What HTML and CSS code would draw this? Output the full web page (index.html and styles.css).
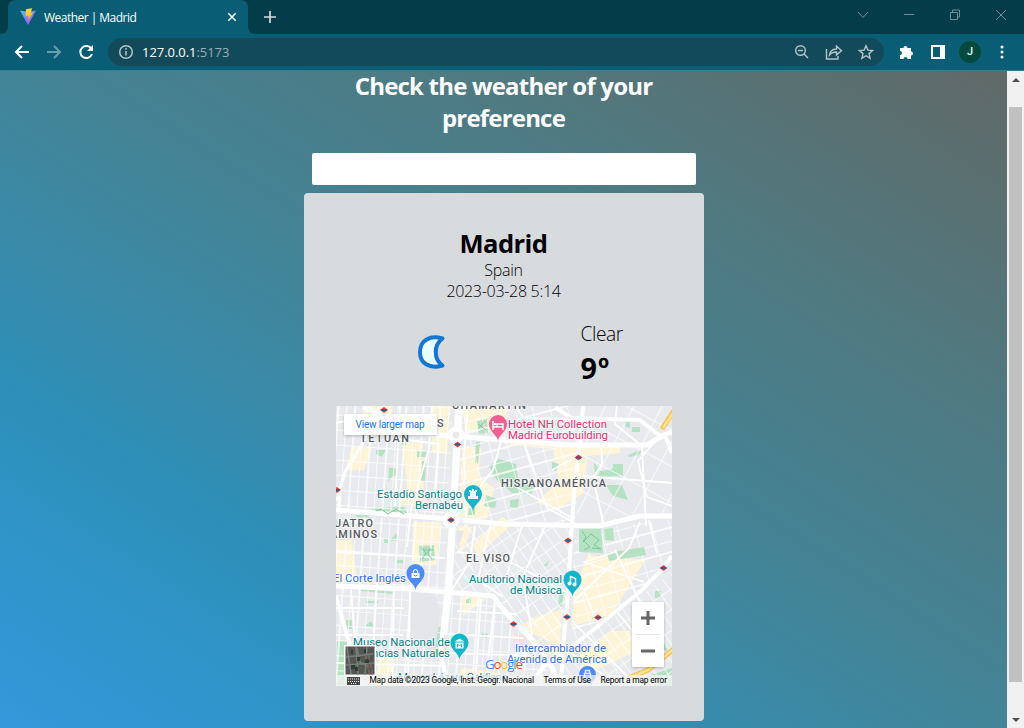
FILE: index.html
```html
<!DOCTYPE html>
<html lang="en">
<head>
<meta charset="utf-8">
<title>Weather | Madrid</title>
<link rel="stylesheet" href="styles.css">
</head>
<body>
<div class="browser">
  <header class="tabs">
    <svg class="tab-shape" width="256" height="34" viewBox="0 0 256 34"><path d="M0 34Q8 34 8 26V8Q8 0 16 0H240Q248 0 248 8V26Q248 34 256 34Z" fill="#095d74"/></svg>
    <div class="tab">
      <svg class="favicon" width="16" height="16" viewBox="0 0 16 16"><defs><linearGradient id="v" x2=".6" y2="1"><stop stop-color="#41c8f5"/><stop offset="1" stop-color="#b84cf8"/></linearGradient><linearGradient id="b" x2="0" y2="1"><stop stop-color="#ffe33a"/><stop offset="1" stop-color="#ff9f12"/></linearGradient></defs><path d="M0 1.5 8 3l8-1.5L8 16Z" fill="url(#v)"/><path d="m6 .3 6-1.100-1.200 4.700 2.200-.3-4.800 8.200.4-4.700-3.100.5Z" fill="url(#b)"/></svg>
      <span class="tab-title">Weather | Madrid</span>
      <svg class="tab-close" width="10" height="10" viewBox="0 0 10 10"><path d="m1.3 1.3 7.4 7.4m0-7.4L1.3 8.7" stroke="#fff" stroke-width="1.5"/></svg>
    </div>
    <svg class="new-tab" width="14" height="14" viewBox="0 0 14 14"><path d="M7 1v12M1 7h12" stroke="#cfdce0" stroke-width="1.7"/></svg>
    <svg class="window-buttons" width="160" height="16" viewBox="0 0 160 16" fill="none" stroke="#718d97"><path d="m5 5 5 5.500 5-5.500M51 7.500h10M97.500 5.500h7v7h-7zM99.500 5v-2h7v7h-2M143 3l10 10m0-10-10 10"/></svg>
  </header>
  <div class="toolbar">
    <svg class="nav" width="84" height="20" viewBox="0 0 84 20" fill="none" stroke-width="2"><path d="M17 10H4m6-6-6 6 6 6" stroke="#fff"/><path d="M35 10h13m-6-6 6 6-6 6" stroke="#6b9dab"/><path d="M79.500 7A6 6 0 1 0 80 12" stroke="#fff"/><path d="M81 3v6h-6Z" fill="#fff"/></svg>
    <div class="address">
      <svg width="16" height="16" viewBox="0 0 16 16" fill="none" stroke="#b6c4c9" stroke-width="1.5"><circle cx="8" cy="8" r="6.300"/><path d="M8 7v4.500M8 4v1.700"/></svg>
      <span class="url">127.0.0.1<span class="port">:5173</span></span>
      <svg class="address-icons" width="82" height="18" viewBox="0 0 82 18" fill="none" stroke="#b5c3c8" stroke-width="1.400"><circle cx="7.500" cy="7.500" r="4.800"/><path d="m11 11 4 4M5 7.500h5M33.500 6v10H45v-3M36.500 12q.5-5.500 7-6V3l5 4.700-5 4.200V9q-5 .2-7 3ZM73 2.700l1.900 4.400 4.700.4-3.600 3.100 1.100 4.600-4.100-2.500-4.100 2.500 1.100-4.600-3.600-3.100 4.700-.4Z"/></svg>
    </div>
    <svg class="puzzle" width="16" height="16" viewBox="0 0 16 16"><path d="M2 4h3.500a2 2 0 1 1 4 0H13v3.500a2 2 0 1 1 0 4V15H9.500a2 2 0 0 0-4 0H2v-4a2 2 0 0 0 0-4Z" fill="#fff"/></svg>
    <div class="side-panel"></div>
    <div class="avatar">J</div>
    <svg width="4" height="14" viewBox="0 0 4 14" fill="#fff"><circle cx="2" cy="2" r="1.500"/><circle cx="2" cy="7" r="1.500"/><circle cx="2" cy="12" r="1.500"/></svg>
  </div>
  <div class="viewport">
    <main class="page">
      <h1 class="heading">Check the weather of your<br>preference</h1>
      <input class="search" type="text" aria-label="City">
      <section class="card">
        <h2 class="city">Madrid</h2>
        <div class="country">Spain</div>
        <div class="date">2023-03-28 5:14</div>
        <div class="conditions">
          <svg class="moon" width="30" height="34" viewBox="0 0 30 34"><path d="M25.500 3.500C13 0 3 5 3 17s10 17 22.500 13.500C16.500 24 16.500 10 25.500 3.500Z" fill="#e9fdff" stroke="#1277d3" stroke-width="4" stroke-linejoin="round"/></svg>
          <div class="readings"><div class="state">Clear</div><div class="temp">9º</div></div>
        </div>
        <div class="map">
          <svg class="map-art" width="336" height="280" viewBox="336 406 336 280">
            <defs>
              <pattern id="p1" width="17" height="15" patternUnits="userSpaceOnUse" patternTransform="rotate(4)"><path d="M0 0H17M0 0V15M9 0V15" class="street"/></pattern>
              <pattern id="p2" width="17" height="24" patternUnits="userSpaceOnUse" patternTransform="rotate(-15)"><path d="M0 0H17M0 0V24M0 11H17" class="street"/></pattern>
              <pattern id="p3" width="10" height="17" patternUnits="userSpaceOnUse" patternTransform="rotate(-35)"><path d="M0 0H10M0 0V17" class="street"/></pattern>
              <pattern id="p4" width="25" height="32" patternUnits="userSpaceOnUse" patternTransform="rotate(28)"><path d="M0 0H25M0 0V32" class="street"/></pattern>
              <g id="metro"><path d="m-4 0 4-3 4 3-4 3Z" fill="#e8433d"/><path d="M-2.500-.9h5v1.800h-5Z" fill="#1c5d9d"/></g>
              <path id="pin" d="M0 16C-1 9-9 7-9-1a9 9 0 0 1 18 0C9 7 1 9 0 16Z"/>
            </defs>
            <path d="M336 406h336v280H336Z" fill="#e8eaed"/>
            <g fill="#fef4d8">
              <path d="m365 406 28 0-6 30-24 0ZM352 446l20 2-8 22-19 0ZM402 443l21 0 1 60-15 0ZM432 406h18l-3 48-15-2ZM463 406h44l-1 27-41-2ZM462 446l19 2-2 30 15 10-7 31-28-2ZM510 443h110v10l-32 3-5 38-28 16-18-8 22-21-6-32-43-4ZM413 522l28 0-4 43-25 0ZM336 540l16 0 5 40-21 2ZM458 526l15 1-13 28ZM472 545l30-28 10 7-34 32ZM588 555l57 5-34 56-40 10 4-38ZM530 619l32-10-2 37-40-18ZM580 655l32-24 20 0 0 22-52 25ZM378 661l16-12v37h-18ZM462 668l38 5-2 13h-42ZM400 505l12-28 4 2v27ZM462 596l25 2-24 18Z"/>
            </g>
            <g fill="#b6e2c4">
              <path d="M477 421l10-2 1 14-9 1ZM476 442h4l-2 22-3-1ZM489 466l10-7 17 5 2 15 17 8-4 7-19-1-12-10-5-5ZM486 495l11 4-2 9-11-2ZM510 500l9-1-1 9-8-1ZM594 463l7 8 12-2 0-5h10v12l-28 1ZM606 485h16l6 15-15-4ZM623 417l7 1v10l-4-1ZM632 427h8v5h-8ZM628 455l15-6-4 6-10 2ZM402 437h4v8h-4ZM417 451h10l-2 6h-8ZM422 461l4 0-1 20h-4ZM376 450h10l-4 7-6-3ZM389 468h8v8h-4l-5 6ZM372 508l32-1 4 8-36-1ZM355 515h12l4 3-15-1ZM469 505h6v10h-7Z"/>
              <path id="parks" d="M419 546l15-1 1 15-15 2ZM361 589l34 3-1 2-33-3ZM429 599l7-1v6h-8ZM366 601h12v2h-12ZM346 620h6v9h-6ZM365 626l6-5 3 6ZM466 600l5-3v6h-5ZM482 633l6 1-1 4-6-1ZM337 641h10v45h-11ZM438 627l3 0-4 30-4-5ZM655 591h6v7h-6ZM552 462l7 2-3 7-4-2ZM390 540l7-7 0 8ZM397 560h6v3h-6ZM384 539h4v4h-4ZM560 592h4l-2 14-4 0ZM543 566l6-5-2 5ZM659 642h5l4 10-7-3ZM647 676l25-8v18h-32Z"/>
            </g>
            <path d="M514 633l13 3-2 10-11-4Z" fill="#f6dedf"/>
            <g>
              <path d="M336 406h117l-6 112-111-8Z" fill="url(#p1)"/><path d="M336 515l111 7-4 164H336Z" fill="url(#p1)"/>
              <path d="M463 406h120l-8 118-121-5Z" fill="url(#p2)"/><path d="M586 406h86v110l-96 10Z" fill="url(#p4)"/>
              <path d="M453 524l118 2-6 120-69-49-46-3Z" fill="url(#p3)"/><path d="M574 530l98-10v46l-100 76Z" fill="url(#p2)"/>
              <path d="M449 595h42l60 80-3 11H446Z" fill="url(#p1)"/><path d="M500 600l63 9v39l-19 20Z" fill="url(#p3)"/><path d="M672 572v114H560l5-33Z" fill="url(#p3)"/>
            </g>
            <path d="M411 592l24-1 5 22-5 40-23-12-2-25ZM456 530l8 1-5 13Z" fill="#e4e6e9"/>
            <path d="M579 529l22-1 2 25-24-1ZM604 529l9-1 1 13-9-1ZM607 553l37-6 2 8-37 6Z" fill="#b6e2c4"/>
            <g fill="none" stroke="#fff" stroke-linejoin="round" stroke-width="1.800">
              <path d="M336 423l36-8 26 24 42 5M379 406l-16 38-17 27-10 30M432 406l-3 43-18 60-4 38M400 406l-5 100M439 443l-5 70M468 406l-4 50 2 62M502 438l-9 32-38 48M516 406l7 12 117 2M523 440l24 68 28 15M552 470l31-17M504 480l68 38M601 444l1 20-9 14 11 48M617 406l-2 18 27 22 4 80M660 436l-22 25 9 36 25 9M583 476l89 7M457 552l44 5 74 40M475 526l-5 35-20 32M490 526l-12 54 25 17M522 526l-18 58M545 526l-22 51 9 58M615 552l-31 10 60 20M640 522l-11 26-55 53M649 520l8 34M336 552l108 6M336 608h68M351 590l5 62M376 590l-4 96M394 592l-2 92M336 635h67M336 663l110 3M410 590l-2 96M481 599l-6 87M457 611l60 3M448 634l75 4M447 653l89 3M495 600l-10 86M572 621l57 57M566 650l55 36M617 612l42 51M600 627l-25-55M640 602l-25-52M536 678l25-30"/>
            </g>
            <g fill="none" stroke="#fff" stroke-linejoin="round" stroke-width="5">
              <path d="M457 406l-3 65-3 49-4 73-5 42-1 20 7 31M461 406l-4 65-3 49-4 73-5 42" stroke-width="4"/>
              <path d="M363 407l65 27 26 2 48 4 68 5h77l17-10 8-3M336 510l114 9 54 5 95 2 41-10 32 0M336 586l74 3 37 3 46 4 14 18 29 30 17 25 3 17"/>
              <path d="M583 406l-3 37-6 50-3 47-4 67-4 40-2 39M672 556l-9 12-21 22-45 37-30 23-24 17-7 10M336 596l16 57M555 407l16 11 69 2 16 13 10 5 6 15" stroke-width="4"/>
              <path d="M373 414l-12 32-15 24-7 20v18" stroke-width="3"/><circle cx="456" cy="435" r="6"/><circle cx="451" cy="520" r="6"/>
            </g>
            <circle cx="456" cy="435" r="3.500" fill="#e8eaed"/>
            <path d="m628 678 20-8 27-22m-13-219 13-20" fill="none" stroke="#f4c351" stroke-width="5"/><path d="m629 678 19-8 27-22m-12-220 12-18" fill="none" stroke="#ffe491" stroke-width="2.500"/>
            <path d="m582 531 4 6-3 5 8-8 8 6-5 5 7 4-9-1m-9-8 7 7-6 3M422 548l4 5-4 6m8-11-2 6 4 5m-9-9h10M478 424l8 6m-8-1 7-8M376 511l5-2 7 5 8-5 8 5" fill="none" stroke="#7fc79b" stroke-width="1"/>
            <g><use href="#metro" x="384" y="410"/><use href="#metro" x="457.500" y="444.500"/><use href="#metro" x="337" y="490"/><use href="#metro" x="451" y="520"/><use href="#metro" x="578.500" y="457.500"/><use href="#metro" x="568" y="540.500"/><use href="#metro" x="663.500" y="568"/><use href="#metro" x="567" y="617"/><use href="#metro" x="598" y="617.500"/><use href="#metro" x="513.500" y="624"/></g>
            <g class="halo area">
              <text x="452" y="409" textLength="74">CHAMARTÍN</text><text x="437" y="427">S</text><text x="360" y="442" textLength="49">TETUAN</text><text x="501" y="487" textLength="105">HISPANOAMÉRICA</text><text x="334" y="527" textLength="39">UATRO</text><text x="330" y="537.500" textLength="47">AMINOS</text><text x="466" y="562" textLength="44">EL VISO</text>
            </g>
            <g class="halo place">
              <g fill="#e62f74"><text x="508" y="428" textLength="99">Hotel NH Collection</text><text x="508" y="439" textLength="100">Madrid Eurobuilding</text></g>
              <g fill="#087f88"><text x="377" y="497.500" textLength="85">Estadio Santiago</text><text x="415" y="509" textLength="48">Bernabéu</text><text x="469" y="583" textLength="93">Auditorio Nacional</text><text x="510" y="594" textLength="52">de Música</text><text x="353" y="646" textLength="97">Museo Nacional de</text><text x="356" y="657" textLength="94">Ciencias Naturales</text><text x="398" y="681" textLength="110">Museo Lázaro Galdiano</text></g>
              <g fill="#3270dc"><text x="333" y="581.500" textLength="73">El Corte Inglés</text><text x="515" y="652" textLength="91">Intercambiador de</text><text x="507" y="663" textLength="100">Avenida de América</text></g>
            </g>
            <g transform="translate(498 425)"><use href="#pin" fill="#f16091"/><path d="M-5-4v9M-5 2h10v3M5 2v-3h-6v3" stroke="#fff" stroke-width="1.500" fill="none"/><circle cx="-3" cy="-1" r="1.300" fill="#fff"/></g>
            <g transform="translate(473 495)"><use href="#pin" fill="#12b5c9"/><path d="M-5 4h10V1H3v-4h1v-2H2v1H1v-2h-2v2h-1v-1h-2v2h1v4h-2Z" fill="#fff"/></g>
            <g transform="translate(572.500 580.500)"><use href="#pin" fill="#12b5c9"/><path d="M-2 3v-7l5 2v6" stroke="#fff" stroke-width="1.500" fill="none"/><circle cx="-3" cy="3" r="2" fill="#fff"/><circle cx="2" cy="4" r="2" fill="#fff"/></g>
            <g transform="translate(459.500 643.500)"><use href="#pin" fill="#12b5c9"/><path d="m-5-2 5-3 5 3ZM-4-1h8v6h-8Z" fill="#fff"/><path d="M-2 4V1l2 1 2-1v3" stroke="#12b5c9" fill="none"/></g>
            <g transform="translate(415.500 574)"><use href="#pin" fill="#4d8cf5"/><path d="M-4-1h8v5h-8Z" fill="#fff"/><path d="M-2 0v-3q2-3 4 0v3" stroke="#fff" stroke-width="1.200" fill="none"/><path d="M-2 1q2 2 4 0" stroke="#4d8cf5" fill="none"/></g>
            <g transform="translate(587.500 674.500)"><circle r="8.500" fill="#4d8cf5"/><path d="M-3-1h6v6h-6ZM-2-1v-3h4v3" stroke="#dce9ff" fill="none" stroke-width="1.500"/></g>
            <text x="485" y="669" textLength="38" class="google"><tspan fill="#4285f4">G</tspan><tspan fill="#ea4335">o</tspan><tspan fill="#fbbc05">o</tspan><tspan fill="#4285f4">g</tspan><tspan fill="#34a853">l</tspan><tspan fill="#ea4335">e</tspan></text>
            <path d="M336 675h336v11H336Z" fill="#f5f5f5" fill-opacity=".72"/>
            <g class="legal"><text x="369.500" y="683" textLength="164.500">Map data ©2023 Google, Inst. Geogr. Nacional</text><text x="543.500" y="683" textLength="47.500">Terms of Use</text><text x="600.500" y="683" textLength="66.500">Report a map error</text></g>
            <path d="M347 677h13v8h-13Z" fill="#484848"/><path d="M348 679h11m-11 2.500h11m-8 2h5" stroke="#eee" stroke-dasharray="1 1"/>
            <g><path d="M344 645h32v31h-32Z" fill="#fff"/><path d="M345.500 646.500h29v28h-29Z" fill="#535753"/><path d="M347 647l4 27m5-27 2 28m9-28-2 28m-19-18 27-3m-27 11 28-2m-17-15 3 14 7 4" stroke="#778078" stroke-width="1.500" fill="none"/><path d="M351 652h2m4 7h3m-9 8h4m9-16h2m-1 10h4m-14 8h3" stroke="#2f3c39" stroke-width="4"/><path d="M365 657h5m-3 9h5m-4 6h5" stroke="#776259" stroke-width="5" stroke-dasharray="2 1"/></g>
          </svg>
          <a class="larger-map">View larger map</a>
          <svg class="zoom-control" width="32" height="65" viewBox="0 0 32 65"><path d="M16 9v14M9 16h14M9 49h14" stroke="#666" stroke-width="3"/><path d="M4 32.500h24" stroke="#e6e6e6"/></svg>
        </div>
      </section>
    </main>
    <div class="scrollbar"><span class="arrow up"></span><div class="thumb"></div><span class="arrow down"></span></div>
  </div>
</div>
</body>
</html>
```
FILE: styles.css
```css
* { box-sizing: border-box; }
body { margin: 0; overflow: hidden; font-family: "Open Sans", "Noto Sans", sans-serif; }
.browser { width: 1024px; height: 728px; display: flex; flex-direction: column; }
.tabs { height: 34px; flex: none; background: #053c49; position: relative; display: flex; align-items: center; }
.tab-shape { position: absolute; left: 0; top: 0; }
.tab { position: relative; width: 248px; padding: 0 11px 0 20px; display: flex; align-items: center; }
.tab-title { margin-left: 8px; flex: 1; color: #fff; font-size: 12px; letter-spacing: -.53px; }
.new-tab { margin-left: 15px; }
.window-buttons { margin: 0 11px 5px auto; }
.favicon { overflow: visible; }
.toolbar { height: 37px; flex: none; background: #095d74; border-bottom: 1px solid #357f91; display: flex; align-items: center; padding: 0 20px 0 12px; }
.nav { margin-right: 12px; }
.address { width: 776px; height: 28px; background: #134a5a; border-radius: 14px; display: flex; align-items: center; padding: 0 9px 0 10px; }
.url { color: #fff; font-size: 13px; letter-spacing: -.05px; margin-left: 8px; flex: 1; }
.port { color: #98afb7; }
.puzzle { margin-left: 14px; overflow: visible; }
.side-panel { width: 14px; height: 14px; margin-left: 17px; border: 2px solid #fff; border-right-width: 5px; }
.avatar { width: 22px; height: 22px; border-radius: 50%; margin: 0 auto 0 14px; background: #014b3e; color: #e8f4ef; font: 500 11px/22px Roboto, sans-serif; text-align: center; }
.viewport { flex: 1; display: flex; min-height: 0; }
.page { flex: 1; display: flex; flex-direction: column; align-items: center; background: linear-gradient(to top right, #3498db 0%, #3095cb 13%, #2d90b9 26%, #388bab 36%, #428497 50%, #50797f 75%, #616967 100%); }
.heading { margin: -1px 0 0; color: #fff; font-size: 24px; line-height: 32px; font-weight: 700; text-align: center; letter-spacing: -.8px; }
.search { width: 384px; height: 32px; margin: 19px 0 8px; padding: 0 8px; border: 0; border-radius: 2px; background: #fff; flex: none; }
.card { width: 400px; height: 528px; flex: none; border-radius: 4px; background: #d8dbde; padding: 32px; color: #000; }
.city { margin: 3px 0 0; font-size: 25.600px; line-height: 32px; text-align: center; letter-spacing: -.6px; }
.country, .date { font-size: 16px; line-height: 21px; text-align: center; letter-spacing: -.3px; font-weight: 350; }
.conditions { margin-top: 18px; height: 86px; display: flex; align-items: flex-start; }
.moon { margin: 15px 0 0 81px; }
.readings { margin-left: 134px; }
.state { font-size: 19.200px; line-height: 28px; font-weight: 350; letter-spacing: -.4px; }
.temp { font-size: 28.800px; line-height: 39px; font-weight: 700; letter-spacing: 1px; }
.map { width: 336px; height: 280px; position: relative; overflow: hidden; }
.map-art { display: block; }
.street { stroke: #fff; stroke-width: 1.4; fill: none; }
.halo text { paint-order: stroke; stroke: #fff; stroke-width: 2px; stroke-opacity: .6; }
.area { font: 500 10.800px Roboto, sans-serif; fill: #55595f; }
.place { font: 400 11.400px Roboto, sans-serif; }
.google { font: 500 13.500px "Open Sans", sans-serif; paint-order: stroke; stroke: #fff; stroke-width: 1px; }
.legal { font: 400 8.400px Roboto, sans-serif; fill: #000; }
.larger-map { position: absolute; left: 8px; top: 8px; width: 93px; height: 21px; background: #fff; color: #1a73e8; font: 10px/22px Roboto, sans-serif; letter-spacing: -.2px; text-align: center; box-shadow: 0 1px 3px #0004; border-radius: 1px; }
.zoom-control { position: absolute; right: 8px; top: 196px; background: #fff; border-radius: 1px; box-shadow: 0 1px 3px #0004; }
.scrollbar { width: 17px; background: #f1f1f1; display: flex; flex-direction: column; align-items: center; padding: 7px 0 6px; }
.arrow { border: 4px solid transparent; height: 4px; width: 8px; }
.up { border-top: 0; border-bottom-color: #505050; }
.down { border-bottom: 0; border-top-color: #505050; margin-top: auto; }
.thumb { width: 13px; height: 575px; margin-top: 25px; background: #c1c1c1; }
```
